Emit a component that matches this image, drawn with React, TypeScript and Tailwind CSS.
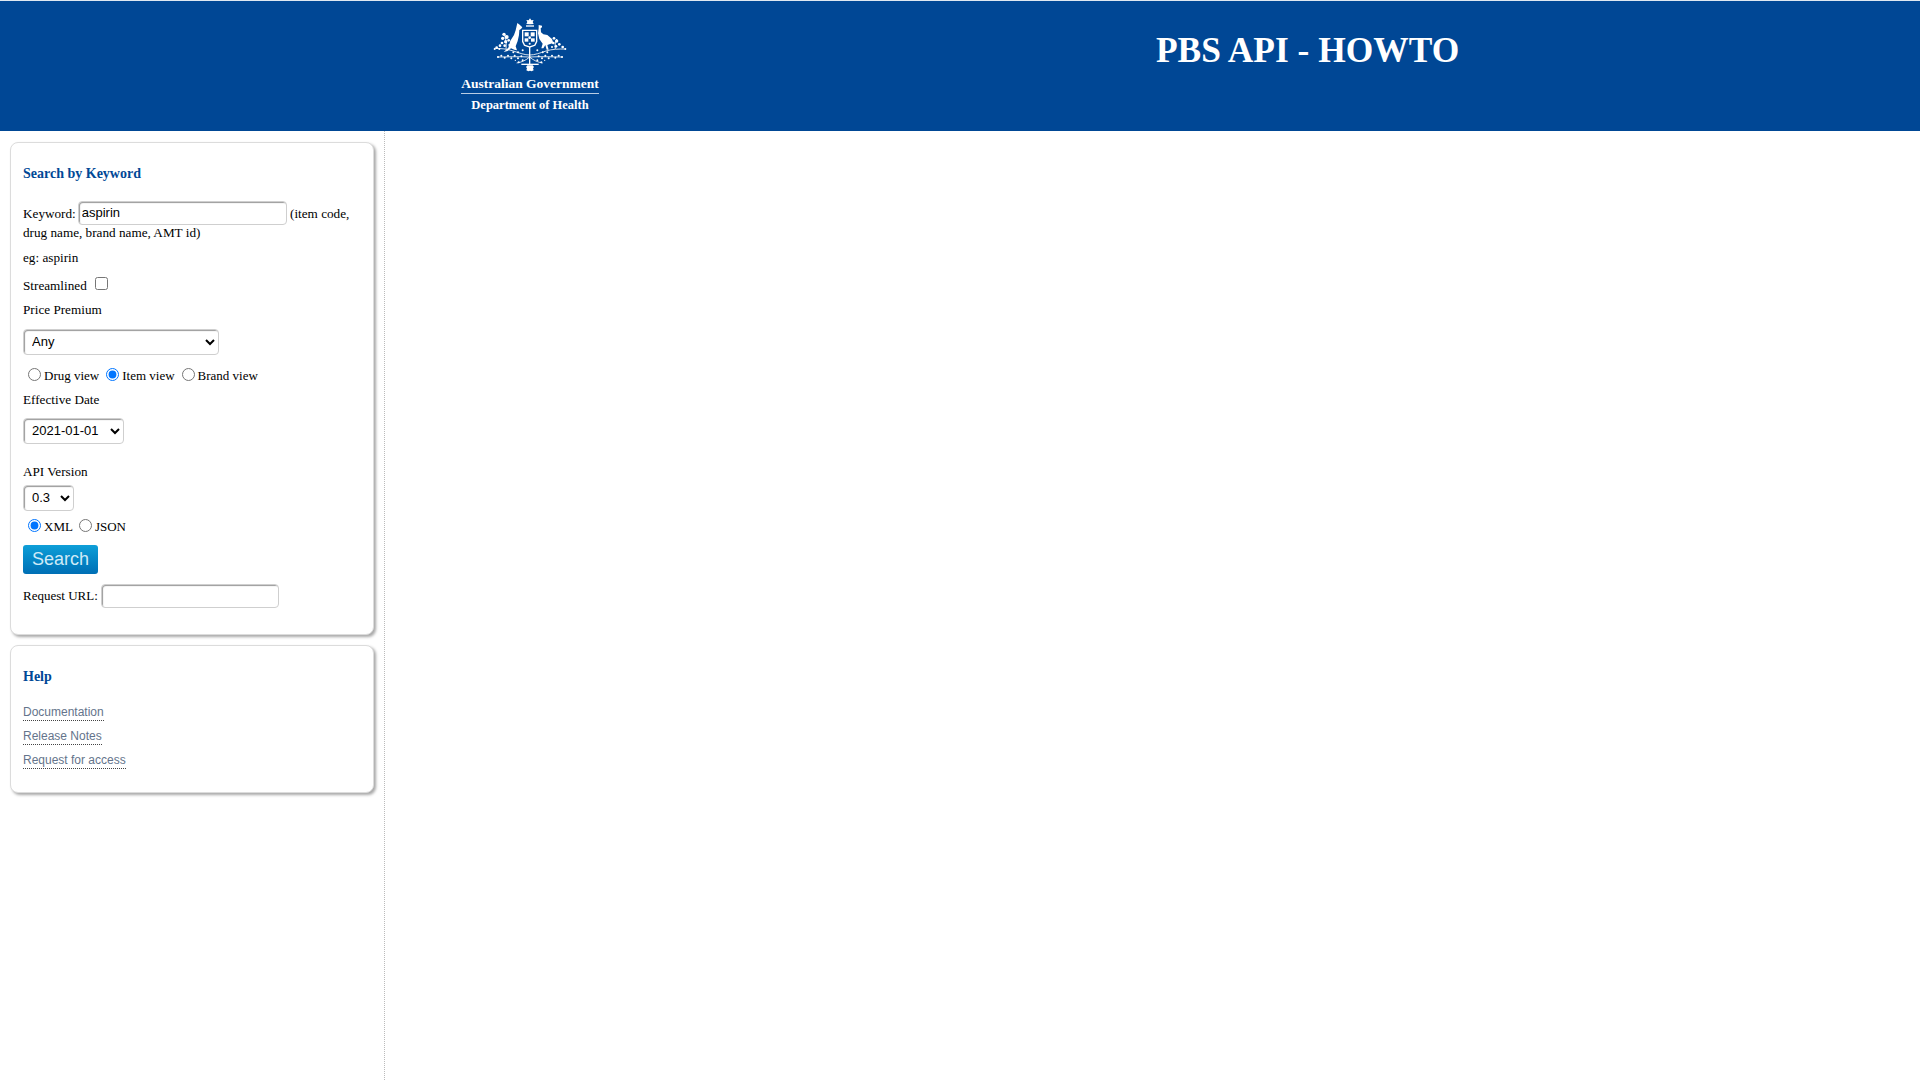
import { ReactNode } from "react"

// wattle blossoms and leaves of the crest, as x, y, r
const blossoms = [
  [42, 58, 5], [50, 66, 6], [38, 70, 5], [47, 80, 5], [36, 84, 4], [56, 76, 4], [30, 92, 4], [44, 92, 4],
  [20, 98, 4], [28, 102, 3], [14, 102, 3], [58, 90, 3],
  [192, 70, 4], [200, 78, 5], [190, 84, 4], [208, 88, 4], [198, 94, 4], [218, 96, 4], [226, 102, 3], [186, 96, 3],
  [24, 126, 3], [34, 122, 3], [44, 128, 3], [54, 122, 3], [64, 130, 3], [74, 122, 3], [84, 130, 3], [94, 124, 3],
  [146, 124, 3], [156, 130, 3], [166, 122, 3], [176, 130, 3], [186, 122, 3], [196, 128, 3], [206, 122, 3], [216, 126, 3],
  [70, 112, 3], [84, 112, 3], [98, 106, 3], [142, 106, 3], [158, 112, 3], [172, 112, 3],
  [86, 142, 3], [98, 136, 3], [142, 136, 3], [154, 142, 3], [76, 136, 2], [164, 136, 2],
]

function Crest() {
  return (
    <svg width="80" height="60" viewBox="0 0 240 180" fill="white" className="block blur-[0.4px]">
      {/* star and wreath */}
      <path d="M120 10l4 6 7-1-3 6 3 6-11 1-11-1 3-6-3-6 7 1z" />
      <rect x="108" y="31" width="24" height="4" />
      {/* kangaroo */}
      <path d="M82 24l7 5 8 8-4 5-5 3-1 15-4 18-6 16 4 12-8-2-10-4-10 8-12 3 14-13 6-21 11-17 5-14z" />
      {/* emu */}
      <path d="M146 30l10 2v5l-4 3 1 12 7 6 12 2 14 12 4 12-12 4-6 2 4 14h-6l-4-14-6 10h-6l4-14-10-14-4-17 2-15z" />
      {/* shield */}
      <path
        fillRule="evenodd"
        d="M96 44h46v36l-6 12-17 6-17-6-6-12zM100 48v31l5 10 14 5 14-5 5-10V48z"
      />
      <rect x="104" y="52" width="12" height="12" />
      <rect x="122" y="52" width="12" height="12" />
      <rect x="104" y="70" width="11" height="10" />
      <rect x="123" y="70" width="11" height="10" />
      <circle cx="119" cy="68" r="4" />
      <circle cx="119" cy="86" r="3" />
      {blossoms.map(([x, y, r]) => (
        <circle key={`${x}-${y}`} cx={x} cy={y} r={r} />
      ))}
      <g fill="none" stroke="white" strokeWidth="2.5">
        {/* upper branches */}
        <path d="M12 100c20 0 40 2 58 8s34 12 49 12c15 0 31-6 49-12s38-6 58-6" />
        <path d="M44 60c4 14 6 28 4 42M200 72c-4 10-6 20-4 30" />
        {/* lower branches */}
        <path d="M22 126c30 0 60-2 97 0 37-2 67 0 99 0" />
        <path d="M80 144c14-2 28-8 39-18 11 10 25 16 39 18" />
        {/* trunk */}
        <path d="M119 96v54" strokeWidth="4" />
      </g>
      {/* scroll and the flower under it */}
      <rect x="94" y="146" width="52" height="4" />
      <path d="M112 151h16l4 5-3 4 2 6-6 3-5-2-5 2-6-3 2-6-3-4z" />
    </svg>
  )
}

function Panel({ title, className, children }: { title: string; className: string; children: ReactNode }) {
  return (
    <section
      className={`w-[364px] rounded-lg border border-[#dcdcdc] bg-white pl-3 shadow-[2px_2px_3px_#a8a8a8] ${className}`}
    >
      <h2 className="text-[14px] leading-[18px] font-bold text-[#004896]">{title}</h2>
      {children}
    </section>
  )
}

const fieldBorder = "rounded border border-[#cfcfcf] shadow-[inset_1px_1px_1px_#9a9a9a] bg-white"
const selectClass = `${fieldBorder} h-[26px] pl-[4px] font-['Liberation_Sans',Arial,sans-serif] text-[13px] text-black`

function HelpLink({ children }: { children: ReactNode }) {
  return (
    <div className="h-6">
      <a
        href="#"
        className="inline-block h-[15px] border-b border-dotted border-[#444] font-['Liberation_Sans',Arial,sans-serif] text-[12px] leading-[13px] text-[#64748b]"
      >
        {children}
      </a>
    </div>
  )
}

export default function App() {
  return (
    <div className="flex min-h-[1080px] flex-col bg-white font-['Liberation_Serif','Times_New_Roman',serif] text-[13.2px] text-black">
      <header className="flex h-[131px] border-t border-[#dfe8f2] bg-[#004795] text-white">
        <div className="ml-[459px] flex w-[142px] flex-col items-center">
          <div className="mt-[14px]">
            <Crest />
          </div>
          <div className="mt-[1px] text-[13.5px] leading-[16px] font-bold whitespace-nowrap">Australian Government</div>
          <div className="mt-[1px] h-px w-[138px] bg-[#b9cde4]" />
          <div className="mt-[3px] text-[12.5px] leading-[16px] font-bold whitespace-nowrap">Department of Health</div>
        </div>
        <h1 className="mt-[30px] ml-[555px] text-[35.4px] leading-[38px] font-bold whitespace-nowrap">PBS API - HOWTO</h1>
      </header>

      <div className="flex flex-1">
        <aside className="w-[385px] border-r border-dotted border-[#bbb] pt-[11px] pl-[10px]">
          <Panel title="Search by Keyword" className="h-[493px] pt-[22px]">
            <div className="mt-[22px] w-[336px] leading-[18px]">
              <span>Keyword:</span>
              <input
                defaultValue="aspirin"
                className={`${fieldBorder} -my-[3px] ml-[2px] h-[24px] w-[209px] -translate-y-[2px] px-[3px] align-middle font-['Liberation_Sans',Arial,sans-serif] text-[13px] outline-none`}
              />
              <span> (item code,</span>
              <br />
              <span>drug name, brand name, AMT id)</span>
            </div>
            <p className="mt-[6px] leading-[19px]">eg: aspirin</p>
            <div className="mt-[9px] flex h-[20px] items-center">
              <span>Streamlined</span>
              <input type="checkbox" className="mb-[4px] ml-[8px] h-[13px] w-[13px]" />
            </div>
            <p className="mt-[4px] leading-[19px]">Price Premium</p>
            <select className={`${selectClass} mt-[10px] block w-[196px]`}>
              <option>Any</option>
            </select>
            <div className="mt-[11px] ml-[5px] flex h-[20px] items-center text-[13px]">
              <input type="radio" name="view" className="mb-[3px] h-[13px] w-[13px]" />
              <span className="ml-[3px]">Drug view</span>
              <input type="radio" name="view" defaultChecked className="mb-[3px] ml-[7px] h-[13px] w-[13px]" />
              <span className="ml-[3px]">Item view</span>
              <input type="radio" name="view" className="mb-[3px] ml-[7px] h-[13px] w-[13px]" />
              <span className="ml-[3px]">Brand view</span>
            </div>
            <p className="mt-[4px] leading-[19px]">Effective Date</p>
            <select className={`${selectClass} mt-[9px] block w-[101px]`}>
              <option>2021-01-01</option>
            </select>
            <p className="mt-[18px] leading-[19px]">API Version</p>
            <select className={`${selectClass} mt-[4px] block w-[51px]`}>
              <option>0.3</option>
            </select>
            <div className="mt-[6px] ml-[5px] flex h-[20px] items-center text-[13px]">
              <input type="radio" name="format" defaultChecked className="mb-[3px] h-[13px] w-[13px]" />
              <span className="ml-[3px]">XML</span>
              <input type="radio" name="format" className="mb-[3px] ml-[6px] h-[13px] w-[13px]" />
              <span className="ml-[3px]">JSON</span>
            </div>
            <button className="mt-[8px] block h-[29px] w-[75px] rounded-[3px] bg-gradient-to-b from-[#0f9fd8] to-[#006fb5] font-['Liberation_Sans',Arial,sans-serif] text-[18px] text-[#cfeaf7]">
              Search
            </button>
            <div className="mt-[10px] flex items-center text-[13px]">
              <span>Request URL:</span>
              <input className={`${fieldBorder} ml-[3px] h-[24px] w-[178px] outline-none`} />
            </div>
          </Panel>

          <Panel title="Help" className="mt-[10px] h-[148px] pt-[22px]">
            <div className="mt-[16px]">
              <HelpLink>Documentation</HelpLink>
              <HelpLink>Release Notes</HelpLink>
              <HelpLink>Request for access</HelpLink>
            </div>
          </Panel>
        </aside>
        <main className="flex-1" />
      </div>
    </div>
  )
}
